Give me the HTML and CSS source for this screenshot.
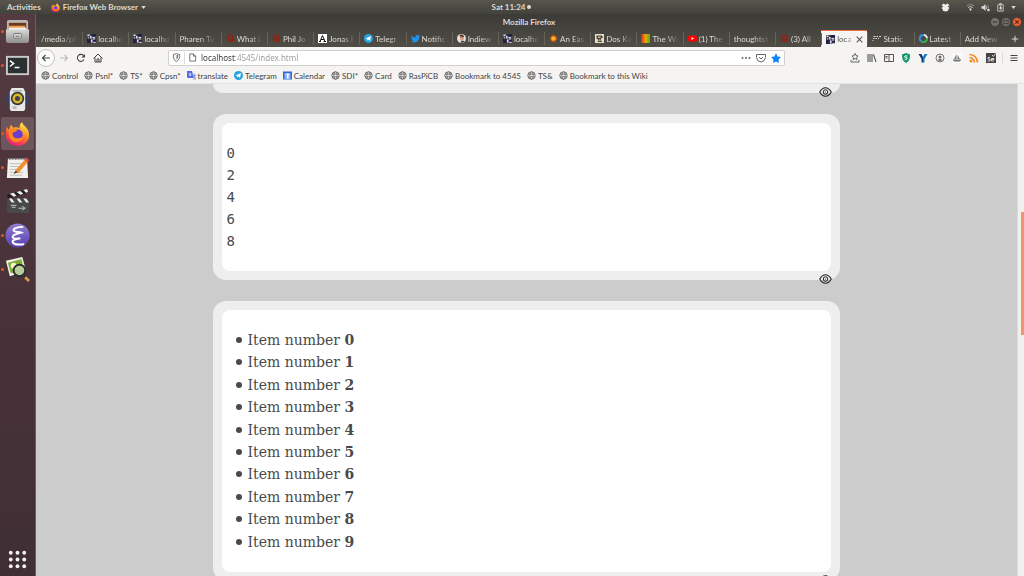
FILE: index.html
```html
<!DOCTYPE html>
<html lang="en">
<head>
  <meta charset="UTF-8">
  <meta name="viewport" content="width=device-width, initial-scale=1.0">
  <title>Mozilla Firefox</title>
  <link rel="stylesheet" href="styles.css">
</head>
<body>
  <!-- Shared icons -->
  <svg class="sprite" aria-hidden="true">
    <defs>
      <linearGradient id="flame" x1="0.8" y1="0" x2="0.3" y2="1">
        <stop offset="0" stop-color="#fff44f"/>
        <stop offset="0.4" stop-color="#ff9a2a"/>
        <stop offset="0.7" stop-color="#ff4a3c"/>
        <stop offset="1" stop-color="#d9208a"/>
      </linearGradient>
      <linearGradient id="metal" x1="0" y1="0" x2="0" y2="1">
        <stop offset="0" stop-color="#d8d8d6"/>
        <stop offset="1" stop-color="#8f8f8d"/>
      </linearGradient>
      <linearGradient id="violet" x1="0" y1="0" x2="0" y2="1">
        <stop offset="0" stop-color="#8e7fd0"/>
        <stop offset="1" stop-color="#5b3fb0"/>
      </linearGradient>
      <linearGradient id="rainbow">
        <stop offset="0" stop-color="#e01e1e"/>
        <stop offset="0.5" stop-color="#f6a500"/>
        <stop offset="1" stop-color="#4caf1c"/>
      </linearGradient>
    </defs>
    <symbol id="firefox" viewBox="0 0 26 26">
      <path fill="url(#flame)" d="M2 6l2 3 2-5 3 3c3-1 5 0 6 1 0-4 1-6 3-7 0 3 3 4 5 7 2 3 2 5 2 7a12 11 0 0 1-24 0C1 11 1 8 2 6z"/>
      <circle cx="13" cy="14" r="5.5" fill="#6a3fd0"/>
      <path fill="#ff8a1f" d="M4 9c3-2 6-2 9 1-2 1-3 2-5 2-1 3 1 6 5 6 3 0 5-1 6-3 0 5-4 7-8 7-5-1-8-6-7-13z"/>
    </symbol>
    <symbol id="globe" viewBox="0 0 18 18">
      <g fill="none" stroke="#666" stroke-width="1.8"><circle cx="9" cy="9" r="7.5"/><ellipse cx="9" cy="9" rx="3.3" ry="7.5"/><path d="M2 6.3h14M2 11.7h14"/></g>
    </symbol>
    <symbol id="local" viewBox="0 0 18 18">
      <rect width="18" height="18" fill="#4b4a55"/>
      <path fill="#232045" d="M0 9h7v9H0zM9 0h9v5H9zM12 11h6v4h-6z"/>
      <path fill="#dcd9ea" d="M1 1h4v3H1zM6 4h3v5H6zM11 6h5v2h-5zM8 11h3v6H8zM2 7h2v2H2zM13 16h4v2h-4zM13 8h2v4h-2z"/>
    </symbol>
    <symbol id="quora" viewBox="0 0 18 18">
      <circle cx="8.5" cy="8" r="5.5" fill="none" stroke="#961f12" stroke-width="3"/><path d="M8 10c4 0 3 6 7 5" fill="none" stroke="#961f12" stroke-width="2.5"/>
    </symbol>
    <symbol id="telegram" viewBox="0 0 18 18">
      <circle cx="9" cy="9" r="9" fill="#27a3e0"/><path fill="#fff" d="M3 9l11-5-2 10-3-3-2 2-1-3z"/>
    </symbol>
    <symbol id="eye" viewBox="0 0 26 20">
      <path d="M1.5 10C5 4 9 1.500 13 1.500S21 4 24.500 10C21 16 17 18.500 13 18.500S5 16 1.500 10z" fill="none" stroke="#222" stroke-width="2.200"/><circle cx="13" cy="10" r="4.500" fill="none" stroke="#222" stroke-width="2"/><circle cx="13" cy="10" r="1.200" fill="#222"/>
    </symbol>
  </svg>

  <!-- Desktop top bar -->
  <header class="topbar">
    <div class="topbar-side">
      <button class="activities">Activities</button>
      <button class="app-menu"><svg class="icon"><use href="#firefox"/></svg>Firefox Web Browser<svg class="arrow" viewBox="0 0 6 4"><path d="M0 0h6L3 4z"/></svg></button>
    </div>
    <button class="clock">Sat 11:24<span class="clock-dot"></span></button>
    <div class="topbar-side status">
      <svg class="icon dropbox" viewBox="0 0 20 20"><path fill="#eee" d="M6 1l4 3 4-3 5 4-4 3 4 3-3 3v3l-6 2-6-2v-3l-3-3 4-3-4-3z"/></svg>
      <svg class="icon" viewBox="0 0 20 20"><path d="M2 6Q10 0 18 6" fill="none" stroke="#98968f" stroke-width="2"/><path d="M5 10q5-4 10 0" fill="none" stroke="#ddd" stroke-width="2"/><path fill="#eee" d="M7 13q3-2 6 0l-3 5z"/></svg>
      <svg class="icon" viewBox="0 0 20 20"><path fill="#ddd" d="M1 7h4l5-5v16l-5-5H1z"/><path d="M12 7q2 3 0 6" fill="none" stroke="#ddd" stroke-width="2"/><path d="M15 4q3 4 1 8" fill="none" stroke="#98968f" stroke-width="2"/><path fill="#ddd" d="M14 13h5v5h-5z"/></svg>
      <svg class="icon" viewBox="0 0 20 20"><path d="M4 4h12v14H4zM8 1h4v3H8z" fill="none" stroke="#ccc" stroke-width="2"/><path fill="#eee" d="M11 5l-4 7h3v5l4-7h-3z"/></svg>
      <svg class="arrow" viewBox="0 0 6 4"><path d="M0 0h6L3 4z"/></svg>
    </div>
  </header>

  <div class="desktop">
    <!-- Dock -->
    <nav class="dock" aria-label="Dock">
      <button class="dock-item running" aria-label="Files">
        <svg viewBox="0 0 26 26"><rect x="2" y="1" width="22" height="12" rx="2" fill="#b9b7b3"/><path fill="#6b3b1c" d="M4 4h18v8H4z"/><path fill="#ef9a51" d="M4 7h17v5H4z"/><path fill="#f2efe8" d="M4 9h18v3H4z"/><path fill="url(#metal)" d="M1 11h24v11q0 3-3 3H4q-3 0-3-3z"/><rect x="9" y="15" width="8" height="5" rx="1" fill="#d5d5d5" stroke="#777"/><path stroke="#666" d="M11 18h4"/></svg>
      </button>
      <button class="dock-item running" aria-label="Terminal">
        <svg viewBox="0 0 26 26"><rect x="1" y="3" width="24" height="20" fill="#c9c9c7"/><rect x="3" y="5" width="20" height="16" fill="#2b3033"/><path d="M5 8l4 3-4 3M10 15h5" fill="none" stroke="#fff" stroke-width="1.500"/></svg>
      </button>
      <button class="dock-item" aria-label="Music">
        <svg viewBox="0 0 26 26"><circle cx="13" cy="13" r="12" fill="#38405a"/><path fill="#e8e8e6" d="M7 1h12l2 4v17q0 3-3 3H8q-3 0-3-3V5z"/><path fill="#b9b9b7" d="M8 3h10v2H8zM8 20h4v3H8z"/><circle cx="13" cy="12" r="7" fill="#3a3a3a"/><circle cx="13" cy="12" r="5.200" fill="#d9b62c"/><circle cx="13" cy="12" r="2.600" fill="#454545"/></svg>
      </button>
      <button class="dock-item running current" aria-label="Firefox">
        <svg viewBox="0 0 26 26"><use href="#firefox"/></svg>
      </button>
      <button class="dock-item running" aria-label="Text Editor">
        <svg viewBox="0 0 26 26"><path fill="#f2f1ed" d="M3 4h20l1 20H2z"/><path stroke="#777" stroke-width="2" stroke-dasharray="2 1" d="M4 4h18"/><path stroke="#bcbcb8" d="M5 9h14M5 12h13M5 15h10M5 18h14M5 21h13"/><path d="M12 18L23 5" stroke="#f0912b" stroke-width="4"/><path d="M22 6l2-2" stroke="#d84b49" stroke-width="4"/><path fill="#4a4038" d="M9 20l2-4 2 2z"/></svg>
      </button>
      <button class="dock-item" aria-label="Video Editor">
        <svg viewBox="0 0 26 26"><rect x="2" y="10" width="23" height="15" rx="1" fill="#48494a"/><path fill="#202222" d="M2 6l21-6 1 4L3 10z"/><path fill="#eee" d="M5 5l4 3 3-1-3-3zM12 3l4 3 3-1-3-3zM19 1l3 3 2-1-1-3zM4 10l3 4h3l-3-4zM12 10l3 4h3l-3-4zM19 10l3 4h3l-3-4z"/><path stroke="#c9c9c9" fill="none" d="M6 17h6M7 19h4M14 20h6M18 18l3 2-3 2"/></svg>
      </button>
      <button class="dock-item running" aria-label="Emacs">
        <svg viewBox="0 0 26 26"><circle cx="13" cy="13" r="12.500" fill="url(#violet)"/><path d="M19 4C12 4 8 6 9 8s6 1 8 2c-5 1-10 3-9 5s5 1 8 1c-5 1-9 2-8 4s6 3 12 2" fill="none" stroke="#fff" stroke-width="2"/></svg>
      </button>
      <button class="dock-item running" aria-label="Image Viewer">
        <svg viewBox="0 0 26 26"><path fill="#f1f1ea" d="M1 4l17-4 4 15-17 5z"/><path fill="#7fae35" d="M3 6l14-4 3 12-14 3z"/><circle cx="9" cy="9" r="3" fill="#f7f5d0"/><circle cx="15" cy="14" r="6" fill="#b9ce9c" stroke="#29302b" stroke-width="2"/><path stroke="#353535" stroke-width="3" d="M19 18l3 3"/><path stroke="#d39b4a" stroke-width="3" d="M21 21l4 4"/></svg>
      </button>
      <button class="dock-item apps" aria-label="Show Applications">
        <svg viewBox="0 0 26 26" fill="#f4f2f3"><circle cx="6" cy="6" r="2"/><circle cx="13" cy="6" r="2"/><circle cx="20" cy="6" r="2"/><circle cx="6" cy="13" r="2"/><circle cx="13" cy="13" r="2"/><circle cx="20" cy="13" r="2"/><circle cx="6" cy="20" r="2"/><circle cx="13" cy="20" r="2"/><circle cx="20" cy="20" r="2"/></svg>
      </button>
    </nav>

    <!-- Browser window -->
    <div class="window">
      <div class="titlebar">
        <span class="title">Mozilla Firefox</span>
        <div class="window-buttons">
          <button aria-label="Minimize"><svg viewBox="0 0 18 18"><circle cx="9" cy="9" r="8" fill="#74716b" stroke="#35342f"/><path d="M5 9h8" stroke="#3a3935" stroke-width="2"/></svg></button>
          <button aria-label="Maximize"><svg viewBox="0 0 18 18"><circle cx="9" cy="9" r="8" fill="#74716b" stroke="#35342f"/><path d="M5 6h8v6H5z" fill="none" stroke="#3a3935" stroke-width="1.500"/></svg></button>
          <button aria-label="Close"><svg viewBox="0 0 18 18"><circle cx="9" cy="9" r="8" fill="#ee6036" stroke="#35342f"/><path d="M6 6l6 6M12 6l-6 6" stroke="#5b2a18" stroke-width="2"/></svg></button>
        </div>
      </div>

      <div class="tabs">
        <button class="tab"><span>/media/ph</span></button>
        <button class="tab"><svg class="icon"><use href="#local"/></svg><span>localho</span></button>
        <button class="tab"><svg class="icon"><use href="#local"/></svg><span>localho</span></button>
        <button class="tab"><span>Pharen Tu</span></button>
        <button class="tab"><svg class="icon"><use href="#quora"/></svg><span>What i</span></button>
        <button class="tab"><svg class="icon"><use href="#quora"/></svg><span>Phil Jo</span></button>
        <button class="tab"><svg class="icon" viewBox="0 0 18 18"><rect width="18" height="18" fill="#fff"/><path d="M4 15L9 3l5 12M6 11h6M2 15h4M11 15h5" fill="none" stroke="#111" stroke-width="2"/></svg><span>Jonas E</span></button>
        <button class="tab"><svg class="icon"><use href="#telegram"/></svg><span>Telegr</span></button>
        <button class="tab"><svg class="icon" viewBox="0 0 18 18"><path fill="#1d94f0" d="M1 3c3 3 5 4 8 4 0-5 4-6 6-4l3-1-2 3 2 0-2 2c0 9-9 12-16 8 2 0 4 0 5-2-2 0-3-1-4-3h2C1 9 1 7 1 6l2 1C1 5 0 5 1 3z"/></svg><span>Notific</span></button>
        <button class="tab"><svg class="icon" viewBox="0 0 18 18"><circle cx="9" cy="9" r="9" fill="#e8ded8"/><path fill="#4a2f26" d="M5 3c4-4 9-1 9 3l-2 1-5-1z"/><circle cx="10" cy="9" r="4" fill="#d8a083"/><path fill="#3e3a46" d="M7 18l2-5 5 1 1 2z"/><path fill="#a8543c" d="M7 5h5v2H7z"/></svg><span>Indiew</span></button>
        <button class="tab"><svg class="icon"><use href="#local"/></svg><span>localho</span></button>
        <button class="tab"><svg class="icon" viewBox="0 0 18 18"><circle cx="9" cy="9" r="5" fill="#f6b62a"/><circle cx="9" cy="9" r="6" fill="none" stroke="#c4521b" stroke-width="3" stroke-dasharray="3 1.700"/></svg><span>An Eas</span></button>
        <button class="tab"><svg class="icon" viewBox="0 0 18 18"><rect width="18" height="18" fill="#e5dfc8"/><path fill="#4a4438" d="M3 3h11l2 4-4 2v4l3 3H5l2-4-4-3z"/><path fill="#c9bc92" d="M6 5h5v3H6zM8 11h3v3H8z"/></svg><span>Dos Ka</span></button>
        <button class="tab"><svg class="icon" viewBox="0 0 18 18"><rect width="18" height="18" fill="url(#rainbow)"/></svg><span>The Wi</span></button>
        <button class="tab"><svg class="icon" viewBox="0 0 18 18"><rect y="3" width="18" height="12" rx="3" fill="#f00"/><path fill="#fff" d="M7 6l5 3-5 3z"/></svg><span>(1) The</span></button>
        <button class="tab"><span>thoughtst</span></button>
        <button class="tab"><svg class="icon"><use href="#quora"/></svg><span>(3) All</span></button>
        <div class="tab active"><svg class="icon"><use href="#local"/></svg><span>loca</span><button class="tab-close" aria-label="Close tab"><svg viewBox="0 0 10 10"><path d="M1 1l8 8M9 1L1 9" stroke="#555" stroke-width="1.500"/></svg></button></div>
        <button class="tab"><svg class="icon" viewBox="0 0 18 18"><path d="M3 5h4M9 5h3M14 5h4M2 9h3M7 9h3M12 9h2M1 13h2" stroke="#ddd" stroke-width="2"/></svg><span>Static</span></button>
        <button class="tab"><svg class="icon" viewBox="0 0 18 18"><g fill="none" stroke-width="4"><path d="M9 2a7 7 0 0 1 7 7" stroke="#e0e6ea"/><path d="M16 9a7 7 0 0 1-11 6" stroke="#37b34a"/><path d="M5 15A7 7 0 0 1 9 2" stroke="#3c8de0"/></g></svg><span>Latest</span></button>
        <button class="tab"><span>Add New</span></button>
        <button class="new-tab" aria-label="New tab"><svg viewBox="0 0 10 10"><path d="M5 1v8M1 5h8" stroke="#ddd" stroke-width="1.200"/></svg></button>
      </div>

      <div class="toolbar">
        <div class="nav-buttons">
          <button class="back" aria-label="Back"><svg viewBox="0 0 20 20"><path d="M18 10H3M9 4l-6 6 6 6" fill="none" stroke="#444" stroke-width="2.200"/></svg></button>
          <button aria-label="Forward"><svg viewBox="0 0 20 20"><path d="M2 10h15M11 4l6 6-6 6" fill="none" stroke="#bbb" stroke-width="2.200"/></svg></button>
          <button aria-label="Reload"><svg viewBox="0 0 20 20"><path d="M16 13a7 7 0 1 1-1-8l2 2" fill="none" stroke="#444" stroke-width="2.200"/><path fill="#444" d="M18 2v7h-7z"/></svg></button>
          <button aria-label="Home"><svg viewBox="0 0 20 20"><path d="M1 11l9-9 9 9M4 9v9h12V9M8 18v-6h4v6" fill="none" stroke="#444" stroke-width="2"/></svg></button>
        </div>
        <div class="urlbar">
          <svg class="icon" viewBox="0 0 20 20"><path d="M3 3q4 0 7-2 3 2 7 2 1 12-7 16Q2 15 3 3z" fill="none" stroke="#666" stroke-width="2"/><path fill="#777" d="M10 4l4 1q0 7-4 10z"/></svg>
          <span class="divider"></span>
          <svg class="icon" viewBox="0 0 20 20"><path d="M4 2h8l5 5v11H4zM12 2v5h5" fill="none" stroke="#666" stroke-width="2"/></svg>
          <input type="text" aria-label="Address" value="localhost:4545/index.html">
          <button aria-label="Page actions"><svg viewBox="0 0 20 20" fill="#666"><circle cx="3" cy="10" r="2"/><circle cx="10" cy="10" r="2"/><circle cx="17" cy="10" r="2"/></svg></button>
          <button aria-label="Save to Pocket"><svg viewBox="0 0 20 20"><path d="M1 3h18v6q-1 8-9 9-8-1-9-9zM6 8l4 4 4-4" fill="none" stroke="#666" stroke-width="2"/></svg></button>
          <button aria-label="Bookmark this page"><svg viewBox="0 0 20 20"><path fill="#0a84ff" d="M10 0l3 7 7 1-5 5 1 7-6-3-6 3 1-7-5-5 7-1z"/></svg></button>
        </div>
        <div class="tools">
          <button aria-label="Bookmarks"><svg viewBox="0 0 20 20"><path d="M10 1l2 4 4 1-3 3 1 4-4-2-4 2 1-4-3-3 4-1zM2 14v4h16v-4" fill="none" stroke="#555" stroke-width="1.800"/></svg></button>
          <button aria-label="Library"><svg viewBox="0 0 20 20"><path d="M2 2v16M6 2v16M10 2v16M13 3l5 15" stroke="#555" stroke-width="2.200"/></svg></button>
          <button aria-label="Sidebars"><svg viewBox="0 0 20 20"><path d="M1 3h18v14H1zM10 3v14M3 7h4M3 10h4" fill="none" stroke="#555" stroke-width="2"/></svg></button>
          <button aria-label="Shield"><svg viewBox="0 0 20 20"><path fill="#18936c" d="M10 0l8 3q1 12-8 17Q1 15 2 3z"/><path d="M13 6q-6-2-6 2 7 0 5 4-2 2-5 0" fill="none" stroke="#e6fff5" stroke-width="2"/></svg></button>
          <button aria-label="Yoast"><svg viewBox="0 0 20 20"><path fill="#0b3f7a" d="M1 2h6l3 6v11H7v-7z"/><path fill="#1b7bc8" d="M19 2h-6l-3 6v11h3v-7z"/></svg></button>
          <button aria-label="Account"><svg viewBox="0 0 20 20"><circle cx="10" cy="10" r="8" fill="none" stroke="#777" stroke-width="2"/><circle cx="10" cy="8" r="3" fill="#666"/><path fill="#666" d="M5 14q5-4 10 0-5 4-10 0z"/></svg></button>
          <button aria-label="Ship"><svg viewBox="0 0 20 20"><rect width="20" height="20" fill="#fafafa"/><path fill="#777" d="M9 2v10H4zM11 4l5 8h-5zM1 13h18l-3 4H4z"/></svg></button>
          <button aria-label="Feeds"><svg viewBox="0 0 20 20"><circle cx="4" cy="16" r="3" fill="#f68b1f"/><path d="M1 9q9 1 10 10M1 3q15 1 16 16" fill="none" stroke="#f68b1f" stroke-width="3.500"/></svg></button>
          <button aria-label="Selenium"><svg viewBox="0 0 20 20"><rect width="20" height="20" fill="#444"/><path d="M12 4l3 3 4-6M8 9H4v3h4v4H3M11 13h5v-2h-5v5h5" fill="none" stroke="#fff" stroke-width="1.500"/></svg></button>
        </div>
        <button class="menu" aria-label="Open menu"><svg viewBox="0 0 20 20"><path d="M3 5h14M3 10h14M3 15h14" stroke="#444" stroke-width="2"/></svg></button>
      </div>

      <nav class="bookmarks" aria-label="Bookmarks">
        <a href="#"><svg class="icon"><use href="#globe"/></svg>Control</a>
        <a href="#"><svg class="icon"><use href="#globe"/></svg>Psnl*</a>
        <a href="#"><svg class="icon"><use href="#globe"/></svg>TS*</a>
        <a href="#"><svg class="icon"><use href="#globe"/></svg>Cpsn*</a>
        <a href="#"><svg class="icon" viewBox="0 0 18 18"><path fill="#5468e8" d="M0 0h10l4 14H2q-2 0-2-2z"/><path fill="#c5c9d6" d="M11 5h7v13h-7l2-4z"/><path d="M8 5q-4-2-4 2 1 4 4 2V7H6" fill="none" stroke="#fff" stroke-width="1.300"/><path d="M12 9h5M15 8q0 4-3 6M13 11l4 4" fill="none" stroke="#5468e8"/></svg>translate</a>
        <a href="#"><svg class="icon"><use href="#telegram"/></svg>Telegram</a>
        <a href="#"><svg class="icon" viewBox="0 0 18 18"><path fill="#3169d8" d="M0 1h18v16H0z"/><path fill="#8db4f5" d="M3 5h12v12H3z"/><path fill="#fff" d="M5 5h8v2H5zM8 7h3v8H8z"/></svg>Calendar</a>
        <a href="#"><svg class="icon"><use href="#globe"/></svg>SDI*</a>
        <a href="#"><svg class="icon"><use href="#globe"/></svg>Card</a>
        <a href="#"><svg class="icon"><use href="#globe"/></svg>RasPiCB</a>
        <a href="#"><svg class="icon"><use href="#globe"/></svg>Bookmark to 4545</a>
        <a href="#"><svg class="icon"><use href="#globe"/></svg>TS&amp;</a>
        <a href="#"><svg class="icon"><use href="#globe"/></svg>Bookmark to this Wiki</a>
      </nav>

      <!-- Page -->
      <div class="viewport">
        <main class="page">
          <section class="card card-end">
            <button class="eye" aria-label="View card"><svg><use href="#eye"/></svg></button>
          </section>
          <section class="card">
            <div class="card-body">
<pre>0
2
4
6
8</pre>
            </div>
            <button class="eye" aria-label="View card"><svg><use href="#eye"/></svg></button>
          </section>
          <section class="card">
            <div class="card-body">
              <ul>
                <li>Item number <b>0</b></li>
                <li>Item number <b>1</b></li>
                <li>Item number <b>2</b></li>
                <li>Item number <b>3</b></li>
                <li>Item number <b>4</b></li>
                <li>Item number <b>5</b></li>
                <li>Item number <b>6</b></li>
                <li>Item number <b>7</b></li>
                <li>Item number <b>8</b></li>
                <li>Item number <b>9</b></li>
              </ul>
            </div>
            <button class="eye" aria-label="View card"><svg><use href="#eye"/></svg></button>
          </section>
        </main>
        <div class="scrollbar"><div class="thumb"></div></div>
      </div>
    </div>
  </div>
</body>
</html>
```
FILE: styles.css
```css
* {
  box-sizing: border-box;
}

body {
  margin: 0;
  height: 100vh;
  display: flex;
  flex-direction: column;
  overflow: hidden;
  font-family: Lato, "Noto Sans", sans-serif;
  font-size: 8px;
  color: #dfdbd2;
}

button {
  display: flex;
  align-items: center;
  padding: 0;
  border: none;
  background: none;
  font: inherit;
  color: inherit;
}

svg {
  display: block;
  flex: none;
}

.sprite {
  position: absolute;
  width: 0;
  height: 0;
}

.icon {
  width: 9px;
  height: 9px;
}

.arrow {
  width: 5px;
  height: 3px;
  fill: #dfdbd2;
}

/* Desktop top bar */
.topbar {
  display: flex;
  align-items: center;
  height: 14px;
  padding: 0 8px 0 7px;
  background: linear-gradient(#58554c, #42413b);
  font-weight: bold;
}

.topbar-side {
  flex: 1;
  display: flex;
  align-items: center;
  gap: 10px;
}

.app-menu {
  gap: 3px;
}

.clock {
  gap: 2px;
}

.clock-dot {
  width: 4px;
  height: 4px;
  border-radius: 50%;
  background: #dfdbd2;
}

.status {
  justify-content: flex-end;
  gap: 6px;
}

.dropbox {
  margin-right: 10px;
}

/* Dock */
.desktop {
  flex: 1;
  display: flex;
  min-height: 0;
}

.dock {
  width: 36px;
  display: flex;
  flex-direction: column;
  gap: 1px;
  padding: 1px 1px 0 1px;
  background: linear-gradient(#553a41, #493239 50%, #3f2f34);
  border-right: 1px solid #6b5c61;
}

.dock-item {
  height: 33px;
  justify-content: center;
  position: relative;
  border-radius: 2px;
}

.dock-item svg {
  width: 25px;
  height: 25px;
}

.dock-item.current {
  background: #6d555c;
}

.running::before {
  content: "";
  position: absolute;
  left: 0;
  top: 15px;
  width: 3px;
  height: 3px;
  border-radius: 50%;
  background: #e4552a;
}

.dock .apps {
  margin-top: auto;
}

/* Window */
.window {
  flex: 1;
  min-width: 0;
  display: flex;
  flex-direction: column;
  background: linear-gradient(#3c3b37, #504d46 33px);
}

.titlebar {
  display: grid;
  grid-template-columns: 1fr auto 1fr;
  align-items: center;
  height: 16px;
  padding-right: 2px;
  font-weight: bold;
}

.title {
  grid-column: 2;
}

.window-buttons {
  justify-self: end;
  display: flex;
  gap: 1px;
}

.window-buttons svg {
  width: 10px;
  height: 10px;
}

.tabs {
  display: flex;
  height: 17px;
}

.tab {
  flex: 1 1 0;
  min-width: 0;
  display: flex;
  align-items: center;
  gap: 2px;
  padding: 0 4px 0 5px;
  position: relative;
}

.tab span {
  flex: 1;
  overflow: hidden;
  white-space: nowrap;
  text-align: left;
  mask-image: linear-gradient(90deg, #000 50%, transparent);
}

.tab + .tab::before {
  content: "";
  position: absolute;
  left: 0;
  top: 2px;
  bottom: 2px;
  width: 1px;
  background: #66635b;
}

.tab.active {
  background: #f5f4f2;
  border-top: 1px solid #ee6b40;
  color: #555;
}

.tab-close svg {
  width: 7px;
  height: 7px;
}

.new-tab {
  width: 18px;
  justify-content: center;
}

.new-tab svg {
  width: 8px;
  height: 8px;
}

/* Toolbar */
.toolbar {
  display: flex;
  align-items: center;
  height: 21px;
  padding: 0 5px 0 1px;
  background: #f5f4f2;
}

.toolbar button svg {
  width: 10px;
  height: 10px;
}

.nav-buttons {
  display: flex;
  align-items: center;
  gap: 7px;
}

.back {
  width: 18px;
  height: 18px;
  justify-content: center;
  border: 1px solid #c4c2be;
  border-radius: 50%;
  background: #fcfcfb;
}

.nav-buttons .back {
  margin-right: -3px;
}

.urlbar {
  flex: 1;
  display: flex;
  align-items: center;
  gap: 5px;
  height: 16px;
  margin: 0 65px;
  padding: 0 3px;
  background: #fff;
  border: 1px solid #d2d0cc;
  border-radius: 2px;
}

.divider {
  width: 1px;
  height: 12px;
  margin: 0 -2px;
  background: #ddd;
}

.urlbar input {
  flex: 1;
  min-width: 0;
  margin-left: -1px;
  padding: 0;
  border: none;
  outline: none;
  font: 8px "Noto Sans", sans-serif;
  /* host is darker than the rest of the address */
  color: transparent;
  background: linear-gradient(90deg, #333 34px, #999 34px);
  -webkit-background-clip: text;
  background-clip: text;
}

.tools {
  display: flex;
  gap: 7px;
  padding-right: 6px;
  border-right: 1px solid #dcdad6;
}

.menu {
  margin-left: 6px;
}

/* Bookmarks */
.bookmarks {
  display: flex;
  align-items: center;
  gap: 6px;
  height: 16px;
  padding: 0 5px;
  background: #f5f4f2;
  border-bottom: 1px solid #e2e1de;
}

.bookmarks a {
  display: flex;
  align-items: center;
  gap: 2px;
  color: #444;
  text-decoration: none;
  white-space: nowrap;
}

/* Page */
.viewport {
  flex: 1;
  display: flex;
  min-height: 0;
}

.page {
  flex: 1;
  display: flex;
  flex-direction: column;
  align-items: center;
  gap: 21px;
  overflow: hidden;
  background: #ccc;
  color: #4a4a4a;
  font-family: "DejaVu Serif", serif;
  font-size: 14px;
}

.card {
  flex: none;
  position: relative;
  width: 64%;
  padding: 9px;
  background: #eee;
  border-radius: 13px;
}

.card-end {
  padding: 9px 0 0;
  border-radius: 0 0 13px 13px;
}

.card-body {
  padding: 19px 5px;
  background: #fff;
  border-radius: 8px;
}

pre {
  margin: 0;
  font-family: "DejaVu Sans Mono", monospace;
  font-size: 14px;
  line-height: 22px;
}

ul {
  margin: 0;
  padding-left: 21px;
  line-height: 1.6;
  list-style: none;
}

li::before {
  content: "";
  display: inline-block;
  width: 6px;
  height: 6px;
  margin: 0 6px 0 -12px;
  vertical-align: 2px;
  border-radius: 50%;
  background: #4a4a4a;
}

.eye {
  position: absolute;
  right: 8px;
  bottom: -4px;
}

.eye svg {
  width: 13px;
  height: 10px;
}

.scrollbar {
  width: 7px;
  padding-left: 3px;
  background: #f1f0ee;
  border-left: 1px solid #ddd;
}

.thumb {
  height: 25%;
  background: #f0946c;
  position: relative;
  top: 26%;
}
```
